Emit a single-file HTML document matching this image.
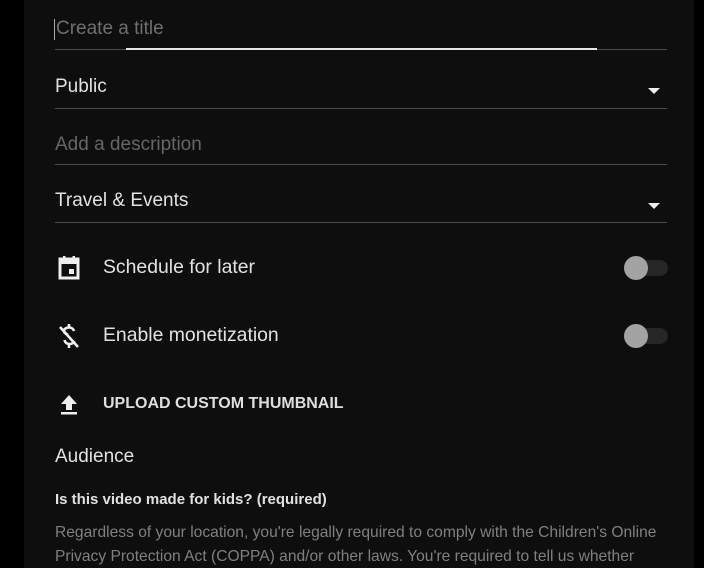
<!DOCTYPE html>
<html><head><style>
body{margin:0;width:704px;height:568px;background:#000;overflow:hidden;font-family:"Liberation Sans",sans-serif;}
.panel{position:absolute;left:24px;top:0;width:670px;height:568px;background:#0e0e0e;}
.t{position:absolute;white-space:nowrap;}
.line{position:absolute;left:55px;width:612px;height:1px;background:#4a4a4a;}
.arrow{position:absolute;left:648px;width:0;height:0;border-left:6px solid transparent;border-right:6px solid transparent;border-top:6px solid #eee;}
.track{position:absolute;left:630px;width:38px;height:16px;border-radius:8px;background:#262626;}
.knob{position:absolute;left:624px;width:24px;height:24px;border-radius:50%;background:#a3a3a3;}
</style></head><body>
<div class="panel"></div>
<div style="position:absolute;left:54px;top:19px;width:1px;height:21px;background:#aaa"></div>
<div class="t" style="left:56px;top:18px;font-size:19px;color:#6f6f6f">Create a title</div>
<div class="line" style="top:49px"></div>
<div style="position:absolute;left:126px;top:48px;width:471px;height:2px;background:#e6e6e6"></div>
<div class="t" style="left:55px;top:76px;font-size:19px;color:#e2e2e2">Public</div>
<div class="arrow" style="top:88px"></div>
<div class="line" style="top:108px"></div>
<div class="t" style="left:55px;top:134px;font-size:19px;color:#666">Add a description</div>
<div class="line" style="top:164px"></div>
<div class="t" style="left:55px;top:190px;font-size:19px;color:#e2e2e2">Travel &amp; Events</div>
<div class="arrow" style="top:203px"></div>
<div class="line" style="top:222px"></div>

<svg style="position:absolute;left:57px;top:255px" width="24" height="26" viewBox="0 0 24 26"><rect x="3" y="4" width="18" height="19" fill="none" stroke="#eee" stroke-width="3"/><rect x="3" y="4" width="18" height="5" fill="#eee"/><rect x="6" y="1" width="2.5" height="4" fill="#eee"/><rect x="15.5" y="1" width="2.5" height="4" fill="#eee"/><rect x="12" y="14" width="5" height="5" fill="#eee"/></svg>
<div class="t" style="left:103px;top:256px;font-size:19.4px;color:#e2e2e2">Schedule for later</div>
<div class="track" style="top:260px"></div><div class="knob" style="top:256px"></div>

<svg style="position:absolute;left:57px;top:323px" width="24" height="26" viewBox="0 0 24 26"><path d="M17 8c-0.5-2-2.5-3.5-5-3.5-3 0-5 1.5-5 3.5 0 2 2 3 4 3.5" fill="none" stroke="#eee" stroke-width="2.6"/><path d="M7.5 17c0.5 2.5 2.5 4 5 4 2.5 0 4.5-1.2 4.5-3" fill="none" stroke="#eee" stroke-width="2.6"/><path d="M12 1v4M12 21v4M3 4l18 20" stroke="#eee" stroke-width="2.6"/></svg>
<div class="t" style="left:103px;top:324px;font-size:19.4px;color:#e2e2e2">Enable monetization</div>
<div class="track" style="top:328px"></div><div class="knob" style="top:324px"></div>

<svg style="position:absolute;left:59px;top:394px" width="20" height="22" viewBox="0 0 20 22"><path d="M10 1L2 10h5v6h6v-6h5z" fill="#eee"/><rect x="2" y="18" width="16" height="2.5" fill="#eee"/></svg>
<div class="t" style="left:103px;top:395px;font-size:16px;font-weight:bold;color:#dedede">UPLOAD CUSTOM THUMBNAIL</div>

<div class="t" style="left:55px;top:446px;font-size:19px;color:#e2e2e2">Audience</div>
<div class="t" style="left:55px;top:491px;font-size:15px;font-weight:bold;color:#e0e0e0">Is this video made for kids? (required)</div>
<div class="t" style="left:55px;top:524px;font-size:15.6px;color:#808080">Regardless of your location, you're legally required to comply with the Children's Online</div>
<div class="t" style="left:55px;top:548px;font-size:15.6px;color:#808080">Privacy Protection Act (COPPA) and/or other laws. You're required to tell us whether</div>
</body></html>
